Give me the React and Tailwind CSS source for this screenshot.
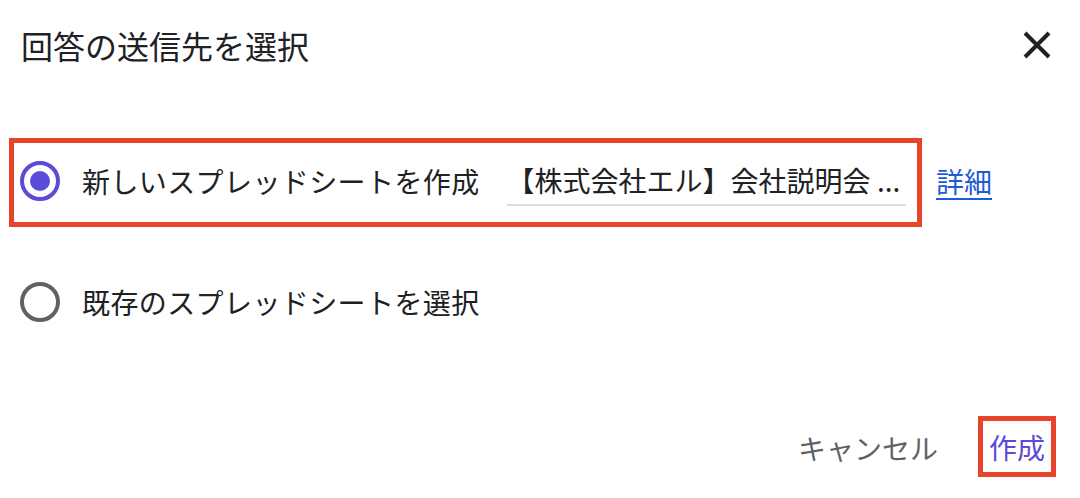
import React from 'react';

const font = { fontFamily: '"Noto Sans CJK JP", "Noto Sans", sans-serif' };

function Radio({ checked }) {
  if (checked) {
    return (
      <span className="flex h-[40px] w-[40px] shrink-0 items-center justify-center rounded-full border-[4px] border-[#5a4bd8]">
        <span className="h-[20px] w-[20px] rounded-full bg-[#5a4bd8]" />
      </span>
    );
  }
  return <span className="h-[40px] w-[40px] shrink-0 rounded-full border-[4px] border-[#5f6368]" />;
}

export default function App() {
  return (
    <div className="h-[498px] w-[1080px] bg-white text-[#202124]" style={font}>
      {/* header */}
      <div className="box-content flex h-[36px] items-center justify-between pl-[21px] pr-[28px] pt-[27px]">
        <h1 className="text-[32px] leading-[36px] font-normal">回答の送信先を選択</h1>
        <svg width="30" height="30" viewBox="0 0 30 30" className="text-[#202124]">
          <path d="M3 3 L27 27 M27 3 L3 27" stroke="currentColor" strokeWidth="4" strokeLinecap="butt" />
        </svg>
      </div>

      {/* option 1 */}
      <div className="mt-[75px] flex items-center pl-[9px]">
        <div className="flex h-[89px] w-[913px] items-center border-[5px] border-[#e8432b] pb-[3px] pl-[6px]">
          <Radio checked />
          <span className="ml-[22px] text-[28px] leading-[36px] tracking-[0.4px]">新しいスプレッドシートを作成</span>
          <div className="ml-[27px] flex h-[50px] w-[399px] items-center border-b-2 border-[#dadce0]">
            <span className="whitespace-nowrap text-[28px] leading-[36px]">【株式会社エル】会社説明会 ...</span>
          </div>
        </div>
        <a className="ml-[14px] mb-[3px] text-[28px] leading-[36px] text-[#1f5bd6] underline underline-offset-[5px]">詳細</a>
      </div>

      {/* option 2 */}
      <div className="mt-[55px] flex items-center pl-[20px]">
        <Radio />
        <span className="ml-[22px] text-[28px] leading-[36px] tracking-[0.4px]">既存のスプレッドシートを選択</span>
      </div>

      {/* actions */}
      <div className="mt-[94px] flex items-center justify-end pr-[24px]">
        <span className="mt-[2px] text-[28px] leading-[36px] text-[#5f6368]">キャンセル</span>
        <div className="ml-[40px] flex h-[61px] w-[78px] items-center justify-center border-[5px] border-[#e8432b]">
          <span className="text-[28px] leading-[36px] text-[#5a4bd8]">作成</span>
        </div>
      </div>
    </div>
  );
}
